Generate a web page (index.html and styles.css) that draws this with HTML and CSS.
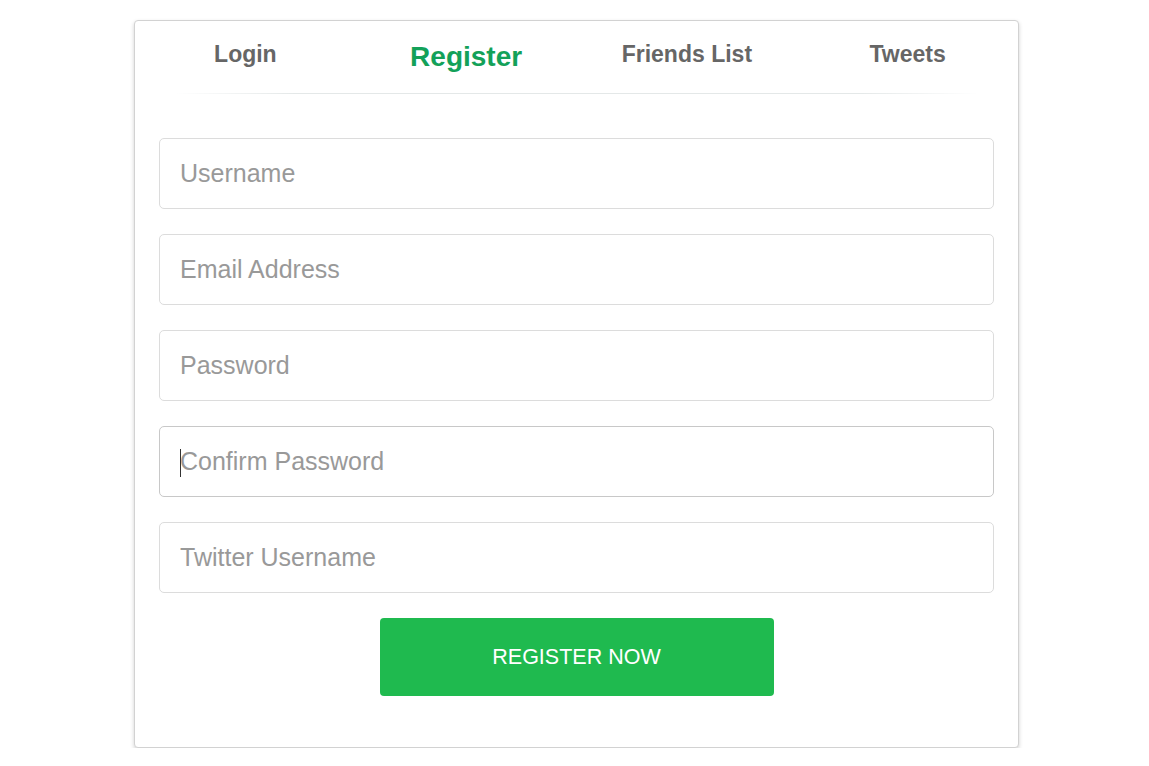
FILE: index.html
```html
<!DOCTYPE html>
<html>
<head>
<meta charset="utf-8">
<link rel="stylesheet" href="styles.css">
</head>
<body>
<div class="page">
  <div class="card">
    <nav class="tabs">
      <a class="tab">Login</a>
      <a class="tab active">Register</a>
      <a class="tab">Friends List</a>
      <a class="tab">Tweets</a>
    </nav>
    <div class="divider"></div>
    <form class="form">
      <input class="field" type="text" placeholder="Username">
      <input class="field" type="email" placeholder="Email Address">
      <input class="field" type="password" placeholder="Password">
      <div class="field focused"><span class="caret"></span><span class="ph">Confirm Password</span></div>
      <input class="field" type="text" placeholder="Twitter Username">
      <button class="btn" type="button">REGISTER NOW</button>
    </form>
  </div>
</div>
</body>
</html>
```

FILE: styles.css
```css
* { box-sizing: border-box; }
html, body { margin: 0; padding: 0; background: #fff; }
body { font-family: "Liberation Sans", Arial, sans-serif; }
.page { padding: 20px 0 0 134px; }
.card {
  width: 885px;
  height: 728px;
  border: 1px solid #d2d2d2;
  border-radius: 4px;
  background: #fff;
  box-shadow: 0 2px 4px rgba(0,0,0,0.18);
}
.tabs {
  display: flex;
  align-items: flex-start;
  height: 72px;
  padding-top: 20px;
}
.tab {
  flex: 1;
  text-align: center;
  font-weight: bold;
  font-size: 23px;
  line-height: 1.149;
  color: #666;
  cursor: pointer;
}
.tab.active { color: #13a159; font-size: 28px; }
.divider {
  height: 1px;
  margin: 0 40px;
  background: linear-gradient(to right, rgba(230,234,234,0), #e4e8e8 15%, #e4e8e8 85%, rgba(230,234,234,0));
}
.form {
  display: flex;
  flex-direction: column;
  align-items: center;
  gap: 25px;
  padding: 44px 24px 0;
}
.field {
  width: 835px;
  height: 71px;
  border: 1px solid #dcdcdc;
  border-radius: 5px;
  padding: 0 20px;
  font-family: "Liberation Sans", Arial, sans-serif;
  font-size: 25px;
  color: #333;
  outline: none;
  background: #fff;
}
.field::placeholder { color: #999; }
.field.focused {
  display: flex;
  align-items: center;
  border-color: #c8c8c8;
  position: relative;
}
.ph { color: #999; }
.caret {
  position: absolute;
  left: 20px;
  top: 22px;
  width: 1px;
  height: 28px;
  background: #333;
}
.btn {
  width: 394px;
  height: 78px;
  border: none;
  border-radius: 4px;
  background: #1fba4f;
  color: #fff;
  font-family: "Liberation Sans", Arial, sans-serif;
  font-size: 21.5px;
  cursor: pointer;
}
```
